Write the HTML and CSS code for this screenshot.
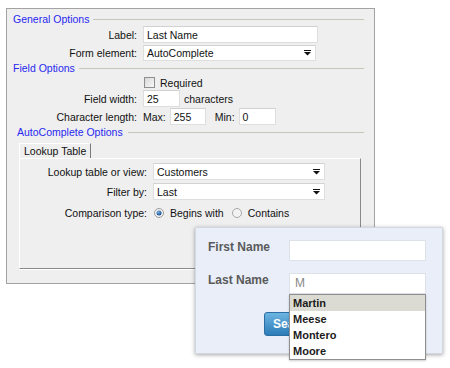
FILE: index.html
```html
<!DOCTYPE html>
<html>
<head>
<meta charset="utf-8">
<link rel="stylesheet" href="styles.css">
</head>
<body>
<div class="panel">
  <div class="legend first"><span>General Options</span><span class="legend-line"></span></div>
  <div class="row"><span class="lbl">Label:</span><div class="field w175">Last Name</div></div>
  <div class="row r-sel"><span class="lbl">Form element:</span><div class="field select w173"><span>AutoComplete</span><svg class="arrow" width="7" height="6" viewBox="0 0 7 6"><rect x="0" y="0" width="7" height="1" fill="#111"/><path d="M0 2H7L3.5 5.5Z" fill="#111"/></svg></div></div>
  <div class="legend"><span>Field Options</span><span class="legend-line"></span></div>
  <div class="row r-check"><span class="lbl"></span><span class="check"></span><span>Required</span></div>
  <div class="row"><span class="lbl">Field width:</span><div class="field w37">25</div><span class="after">characters</span></div>
  <div class="row r-len"><span class="lbl">Character length:</span><span class="max">Max:</span><div class="field w36">255</div><span class="min">Min:</span><div class="field w37">0</div></div>
  <div class="legend legend-ac"><span>AutoComplete Options</span><span class="legend-line"></span></div>
  <div class="tabs">
    <div class="tabstrip"><div class="tab">Lookup Table</div></div>
    <div class="tabpanel">
      <div class="row"><span class="lbl tlbl">Lookup table or view:</span><div class="field select w172"><span>Customers</span><svg class="arrow" width="7" height="6" viewBox="0 0 7 6"><rect x="0" y="0" width="7" height="1" fill="#111"/><path d="M0 2H7L3.5 5.5Z" fill="#111"/></svg></div></div>
      <div class="row r-filter"><span class="lbl tlbl">Filter by:</span><div class="field select w172"><span>Last</span><svg class="arrow" width="7" height="6" viewBox="0 0 7 6"><rect x="0" y="0" width="7" height="1" fill="#111"/><path d="M0 2H7L3.5 5.5Z" fill="#111"/></svg></div></div>
      <div class="row r-radio"><span class="lbl tlbl">Comparison type:</span>
        <svg class="radio" width="10" height="10" viewBox="0 0 10 10"><defs><radialGradient id="rg" cx="0.4" cy="0.35" r="0.6"><stop offset="0" stop-color="#7fb4e8"/><stop offset="1" stop-color="#1a4f8f"/></radialGradient></defs><circle cx="5" cy="5" r="4.5" fill="#f4f4f4" stroke="#9a9a9a"/><circle cx="5" cy="5" r="2.5" fill="url(#rg)"/></svg><span>Begins with</span>
        <svg class="radio r2" width="10" height="10" viewBox="0 0 10 10"><circle cx="5" cy="5" r="4.5" fill="#f2f2f2" stroke="#a8a8a8"/></svg><span>Contains</span>
      </div>
    </div>
  </div>
</div>
<div class="popup">
  <div class="prow"><span class="plbl">First Name</span><div class="pinput"></div></div>
  <div class="prow"><span class="plbl">Last Name</span><div class="pinput">M</div></div>
  <div class="btn">Search</div>
  <div class="dropdown">
    <div class="item sel">Martin</div>
    <div class="item">Meese</div>
    <div class="item">Montero</div>
    <div class="item">Moore</div>
  </div>
</div>
</body>
</html>
```

FILE: styles.css
```css
body {
  margin: 0;
  padding: 8px 0 0 6px;
  font-family: "Liberation Sans", Arial, sans-serif;
  font-size: 10.5px;
  color: #111;
  background: #fff;
}
.panel {
  box-sizing: border-box;
  width: 369px;
  height: 276px;
  border: 1px solid #a3a3a3;
  background: #efefef;
  padding: 0 10px 0 0;
}
.legend {
  display: flex;
  align-items: center;
  height: 14px;
  padding-left: 6px;
  color: #2828f0;
  white-space: nowrap;
}
.legend.first { margin-top: 3px; }
.legend-line {
  flex: 1;
  height: 0;
  border-top: 1px solid #c6c6b8;
  margin-left: 4px;
}
.legend-ac { padding-left: 10px; }
.legend-ac .legend-line { margin-left: 5px; }
.row {
  display: flex;
  align-items: center;
  height: 17px;
  white-space: nowrap;
}
.r-sel { margin-top: 2px; height: 16px; }
.r-check { height: 15px; }
.r-len { margin-top: 1px; }
.lbl {
  flex: none;
  width: 130px;
  margin-right: 6px;
  text-align: right;
}
.tlbl { width: 127px; }
.field {
  box-sizing: border-box;
  height: 100%;
  background: #fff;
  border: 1px solid #dedede;
  border-top-color: #d2d2d2;
  padding: 0 3px;
  display: flex;
  align-items: center;
  flex: none;
}
.select { justify-content: space-between; padding-right: 4px; }
.arrow { display: block; }
.w175 { width: 175px; }
.w173 { width: 173px; }
.w172 { width: 172px; }
.w37 { width: 37px; }
.w36 { width: 36px; }
.check {
  box-sizing: border-box;
  width: 11px;
  height: 11px;
  margin: 0 5px 0 1px;
  border: 1px solid #8e8e8e;
  background: linear-gradient(135deg, #d8d8d8, #f8f8f8);
}
.after { margin-left: 4px; }
.max { margin-right: 4px; }
.min { margin: 0 4px 0 9px; }
.tabs {
  margin: 4px 0 0 12px;
  width: 342px;
}
.tabstrip { display: flex; }
.tab {
  box-sizing: border-box;
  height: 15px;
  line-height: 14px;
  padding: 0 4px;
  border-top: 1px solid #fff;
  border-left: 1px solid #fff;
  border-right: 1px solid #7a7a7a;
  white-space: nowrap;
}
.tabpanel {
  box-sizing: border-box;
  height: 111px;
  border-top: 1px solid #fff;
  border-left: 1px solid #fff;
  border-right: 1px solid #8a8a8a;
  border-bottom: 1px solid #8a8a8a;
  box-shadow: 0 1px 0 #fff;
  padding-top: 4px;
}
.r-filter { margin-top: 3px; }
.r-radio { margin-top: 5px; height: 16px; }
.radio { display: block; flex: none; margin: 0 6px 0 1px; }
.radio.r2 { margin-left: 8px; }
.popup {
  position: absolute;
  left: 195px;
  top: 227px;
  box-sizing: border-box;
  width: 248px;
  height: 127px;
  background: #e9eef9;
  border: 1px solid #d3d7de;
  box-shadow: 0 1px 4px rgba(0, 0, 0, 0.35);
  padding: 12px 0 0 12px;
}
.prow { display: flex; height: 21px; }
.prow + .prow { margin-top: 12px; }
.plbl {
  width: 81px;
  flex: none;
  font-weight: bold;
  font-size: 12px;
  line-height: 14px;
  color: #5a5a5a;
}
.pinput {
  box-sizing: border-box;
  width: 137px;
  height: 21px;
  background: #fff;
  border: 1px solid #dde1e8;
  padding-left: 5px;
  font-size: 12px;
  line-height: 19px;
  color: #888;
}
.btn {
  box-sizing: border-box;
  margin: 18px 0 0 56px;
  width: 62px;
  height: 24px;
  border-radius: 3px;
  border: 1px solid #2b6ea3;
  background: linear-gradient(#6db4e1, #2c7cb7);
  color: #fff;
  font-weight: bold;
  font-size: 12px;
  line-height: 22px;
  padding-left: 8px;
}
.dropdown {
  position: absolute;
  left: 93px;
  top: 66px;
  box-sizing: border-box;
  width: 137px;
  border: 1px solid #8f8f8f;
  background: #fff;
  box-shadow: 0 1px 2px rgba(0, 0, 0, 0.2);
}
.item {
  height: 16px;
  line-height: 16px;
  padding-left: 3px;
  font-weight: bold;
  font-size: 11px;
  color: #1b1b1b;
}
.item.sel { background: #dbdbd3; }
```
